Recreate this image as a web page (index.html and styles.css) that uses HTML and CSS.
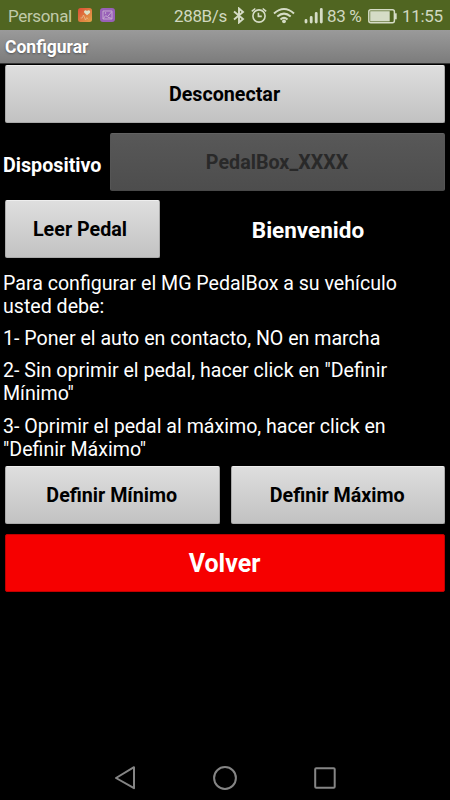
FILE: index.html
```html
<!DOCTYPE html>
<html lang="es">
<head>
<meta charset="utf-8">
<title>Configurar</title>
<link rel="stylesheet" href="styles.css">
</head>
<body>
<div class="screen">
  <header class="status">
    <span class="carrier">Personal</span>
    <svg class="app-icon" width="14" height="14" viewBox="0 0 14 14">
      <defs><linearGradient id="warm" x1="0" y1="0" x2="1" y2="1"><stop offset="0" stop-color="#dc4d35"/><stop offset="1" stop-color="#e2a548"/></linearGradient></defs>
      <rect width="14" height="14" rx="2.5" fill="url(#warm)"/>
      <path d="M9 7.2 6.3 4.7C5.2 2.8 7.7 1.2 9 3c1.6-1.8 4.2 0 2.8 1.9z" fill="#dde3c8"/>
      <path d="M2.5 10h1.7l1.3-3 2 5 1.2-2.4 1.6 1.5" fill="none" stroke="#e9b98c" stroke-width=".8"/>
    </svg>
    <svg class="app-icon gallery" width="15" height="14" viewBox="0 0 15 14">
      <rect width="15" height="14" rx="3" fill="#9860b8"/>
      <path d="M3 3h9v8H3zM3.3 10.5l2.5-3 1.5 1.4L11.5 4M8 9.3l3.5 1" fill="none" stroke="#d0bdd6" stroke-width=".8"/>
      <circle cx="5.5" cy="5" r=".7" fill="#d0bdd6"/>
    </svg>
    <span class="speed">288B/s</span>
    <svg class="bluetooth" width="12" height="17" viewBox="0 0 12 17"><path d="M1 4.5 10 12 6 15.5v-14L10 5 1 12.5" fill="none" stroke="#d5dcc6" stroke-width="1.9"/></svg>
    <svg class="alarm" width="16" height="17" viewBox="0 0 16 17"><g fill="none" stroke="#d5dcc6" stroke-width="1.6"><circle cx="8" cy="9" r="6.1"/><path d="M.8 4.4 4.3 1.5M15.2 4.4l-3.5-2.9M7.4 5.8v3.6h3.4"/></g></svg>
    <svg class="wifi" width="22" height="17" viewBox="0 0 22 17"><g fill="none" stroke="#d5dcc6" stroke-width="2"><path d="M1 6.4Q11-2.4 21 6.4M4.3 9.5q6.7-5.8 13.4 0M7.5 12.4q3.5-3 7 0"/></g><circle cx="11" cy="14.3" r="1.9" fill="#d5dcc6"/></svg>
    <svg class="signal" width="19" height="17" viewBox="0 0 19 17"><path d="M2 15v-1.5M7.2 15v-4.7M12.2 15V6.3M17.3 15V2.3" stroke="#d5dcc6" stroke-width="2.8" stroke-linecap="round"/></svg>
    <span class="percent">83 %</span>
    <svg class="battery" width="29" height="15" viewBox="0 0 29 15"><rect x=".8" y=".8" width="25.6" height="13" rx="2" fill="none" stroke="#d5dcc6" stroke-width="1.5"/><rect x="2.2" y="2.2" width="19.5" height="10.2" fill="#d5dcc6"/><path d="M27.8 4.3v6" stroke="#d5dcc6" stroke-width="1.8"/></svg>
    <span class="clock">11:55</span>
  </header>
  <h1 class="titlebar">Configurar</h1>
  <main class="content">
    <button class="btn">Desconectar</button>
    <div class="row device">
      <span class="label">Dispositivo</span>
      <button class="btn disabled" disabled>PedalBox_XXXX</button>
    </div>
    <div class="row pedal">
      <button class="btn read">Leer Pedal</button>
      <span class="welcome">Bienvenido</span>
    </div>
    <div class="steps">
      <p>Para configurar el MG PedalBox a su vehículo<br>usted debe:</p>
      <p>1- Poner el auto en contacto, NO en marcha</p>
      <p>2- Sin oprimir el pedal, hacer click en "Definir<br>Mínimo"</p>
      <p>3- Oprimir el pedal al máximo, hacer click en<br>"Definir Máximo"</p>
    </div>
    <div class="row limits">
      <button class="btn">Definir Mínimo</button>
      <button class="btn">Definir Máximo</button>
    </div>
    <button class="btn back">Volver</button>
  </main>
  <nav class="navbar">
    <svg width="22" height="24" viewBox="0 0 22 24"><path d="M20 1.2v21L2 12z" fill="none" stroke="#858585" stroke-width="2" stroke-linejoin="round"/></svg>
    <svg width="24" height="24" viewBox="0 0 24 24"><circle cx="12" cy="12" r="10.9" fill="none" stroke="#858585" stroke-width="2"/></svg>
    <svg width="22" height="22" viewBox="0 0 22 22"><rect x="1.2" y="1.2" width="19.5" height="19.5" rx="1" fill="none" stroke="#858585" stroke-width="2"/></svg>
  </nav>
</div>
</body>
</html>
```
FILE: styles.css
```css
* { box-sizing: border-box; }
body { margin: 0; background: #000; font-family: Roboto, sans-serif; color: #fff; }
.screen { width: 450px; height: 800px; display: flex; flex-direction: column; overflow: hidden; }
.status {
  height: 30px; flex: none; display: flex; align-items: center;
  padding-left: 8px; background: #506521; color: #d0d8c0;
  font-size: 17px; letter-spacing: -0.35px; line-height: 30px; white-space: nowrap;
}
.status svg { flex: none; }
.carrier { width: 70px; padding-top: 1px; color: #c0caa9; }
.gallery { margin-left: 8px; }
.speed { width: 58px; margin-left: 59px; padding-top: 1px; }
.bluetooth { margin-left: 1px; }
.alarm { margin-left: 6px; }
.wifi { margin-left: 6px; }
.signal { margin-left: 9px; }
.percent { width: 38px; margin-left: 4px; padding-top: 1px; }
.battery { margin-left: 3px; margin-top: 2px; }
.clock { margin-left: 5px; padding-top: 1px; }
.titlebar {
  height: 34px; flex: none; margin: 0; padding-left: 5px;
  font-size: 17.5px; line-height: 34px; font-weight: 700;
  background: linear-gradient(#9a9a9a, #7c7c7c); border-bottom: 1px solid #333;
  text-shadow: 0 1px 2px #555;
}
.content { flex: 1; padding: 1px 5px 0; display: flex; flex-direction: column; }
.btn {
  flex: none; width: 100%; height: 58px; padding: 2px 1px 0 0; border: 1px solid #aaa;
  border-top-color: #eee; border-radius: 2px;
  background: linear-gradient(#dedede, #c2c2c2);
  color: #000; font: 700 19.7px/1 Roboto, sans-serif;
}
.row { display: flex; align-items: center; }
.device { margin-top: 9.5px; margin-left: -2px; }
.label { width: 107px; flex: none; padding-top: 7px; font-size: 19.7px; font-weight: 700; }
.disabled { flex: 1; background: linear-gradient(#585858, #4d4d4d); border-color: #626262 #555 #484848; color: #292929; }
.pedal { margin-top: 9.5px; }
.read { width: 155px; padding-right: 5px; }
.welcome { flex: 1; margin-left: 11px; padding-top: 1px; text-align: center; font-size: 22.5px; font-weight: 700; }
.steps { margin: 14px 0 0 -2px; font-size: 19.6px; line-height: 23px; white-space: nowrap; }
.steps p { margin: 0 0 9.2px; }
.limits { margin-top: -4px; gap: 11px; }
.limits .btn { flex: 1; }
.back { margin-top: 10px; background: #f60000; border-color: #c00000; color: #fff; font-size: 25px; }
.navbar { height: 45px; flex: none; display: flex; align-items: center; padding: 0 114px; justify-content: space-between; }
```
